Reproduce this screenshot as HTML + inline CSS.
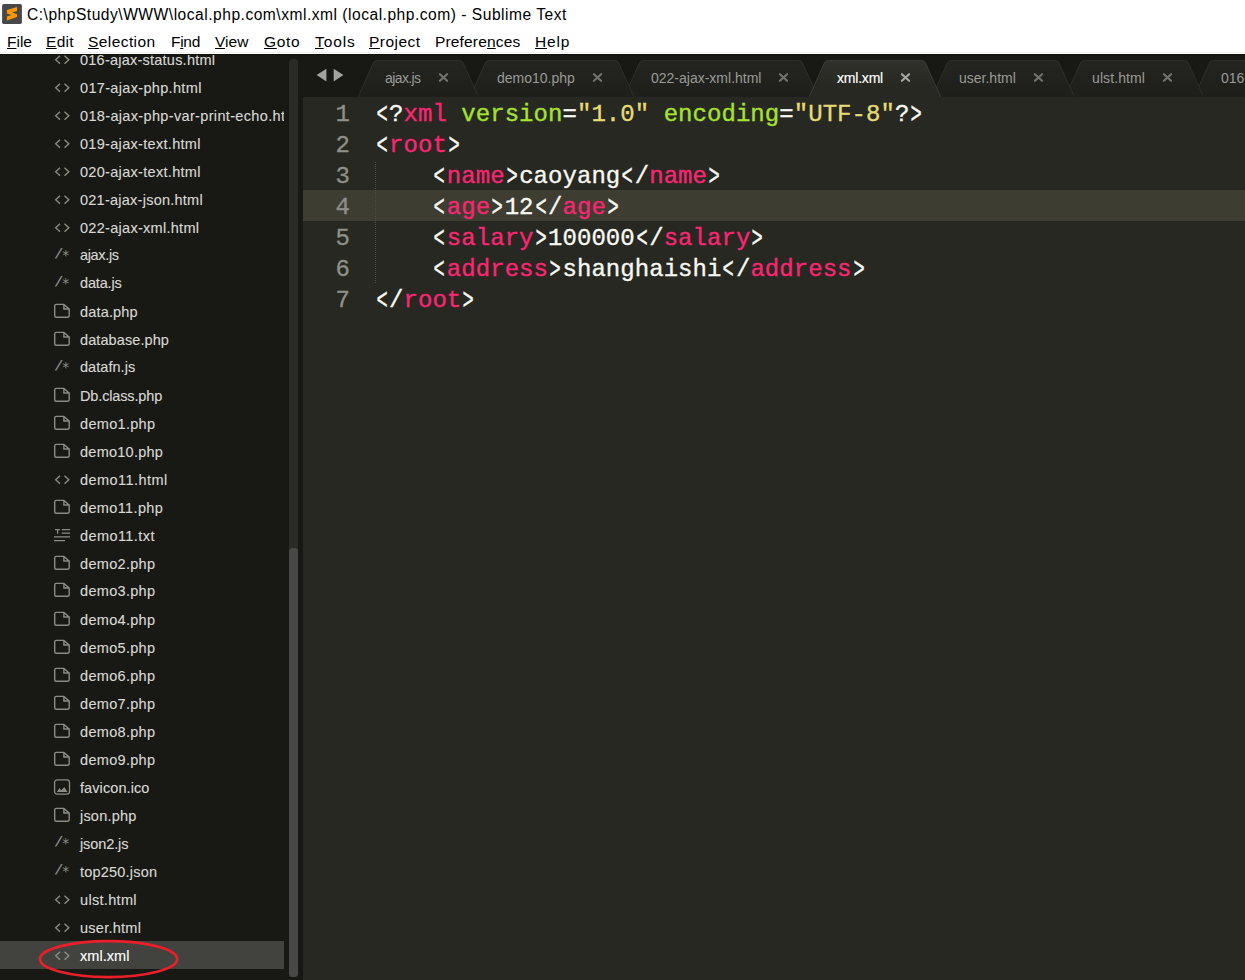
<!DOCTYPE html>
<html><head><meta charset="utf-8"><title>xml.xml - Sublime Text</title>
<style>
html,body{margin:0;padding:0}
body{width:1245px;height:980px;overflow:hidden;background:#fff;position:relative;font-family:"Liberation Sans",sans-serif}
#title{position:absolute;left:27px;top:5px;height:20px;line-height:20px;font-size:15.6px;letter-spacing:0.5px;color:#000;white-space:nowrap}
#appicon{position:absolute;left:2px;top:4px;width:20px;height:20px}
#menu{position:absolute;left:0;top:29px;height:26px;line-height:26px;font-size:15.5px;color:#000;white-space:nowrap}
#menu span{position:absolute;top:0}
#menu u{text-decoration:underline;text-decoration-thickness:1px;text-underline-offset:0.8px}
#dark{position:absolute;left:0;top:54px;width:1245px;height:926px;background:#181914;overflow:hidden}
#side{position:absolute;left:0;top:0;width:284px;height:926px;overflow:hidden}
.row{position:absolute;left:0;width:284px;height:28px;line-height:28px;white-space:nowrap;overflow:hidden}
.row.sel{background:#42433e}
.ic{position:absolute;left:53px;top:6px;width:18px;height:16px}
.sl,.as{position:absolute;font-family:"DejaVu Sans Mono","Liberation Mono",monospace;color:#8b8b86;line-height:1}
.sl{left:53.5px;top:4.5px;font-size:13px;transform:scaleX(1.25);transform-origin:0 0}
.as{left:61.5px;top:7px;font-size:14px}
.fn{position:absolute;left:80px;top:1px;font-size:14.5px;color:#d8d8d4;-webkit-text-stroke:0.12px #d8d8d4}
.row.sel .fn{color:#fff;-webkit-text-stroke:0.12px #fff}
#sbtrack{position:absolute;left:289px;top:5px;width:9px;height:918px;border-radius:3.5px;background:#2a2b26}
#sbthumb{position:absolute;left:289px;top:494px;width:9px;height:429px;border-radius:3.5px;background:#484846}
#tabbar{position:absolute;left:0;top:0;width:1245px;height:43px;overflow:hidden}
.tl{position:absolute;top:6px;height:37px;line-height:36px;font-size:14px;color:#9a9a96;white-space:nowrap}
.tl.act{color:#fff;-webkit-text-stroke:0.15px #fff}
.tx{position:absolute;top:17.8px;width:11px;height:11px}
.ln{position:absolute;left:0;width:942px;height:31px}
.ln.hl{background:#3e3d32}
.num{position:absolute;left:0;width:47px;text-align:right;top:2px;-webkit-text-stroke:0.3px #90908a;height:31px;line-height:31px;font-family:'Liberation Mono',monospace;font-size:24px;color:#90908a}
.code{position:absolute;left:71.6px;top:2px;-webkit-text-stroke:0.35px;height:31px;line-height:31px;font-family:'Liberation Mono',monospace;font-size:24px;letter-spacing:0.05px;color:#f8f8f2;white-space:pre}
.code b{display:inline-block;font-weight:normal;transform:scale(0.78,1.25)}
.t{color:#f92672}.a{color:#a6e22e}.s{color:#e6db74}
#guide{position:absolute;left:72px;top:65px;width:1px;height:121px;background:repeating-linear-gradient(to bottom,#4e4f48 0,#4e4f48 1px,transparent 1px,transparent 2px)}
.tabshape{position:absolute;top:6px;height:37px}
#editor{position:absolute;left:303px;top:43px;width:942px;height:883px;background:#272822}
</style></head><body>
<svg id="appicon" viewBox="0 0 20 20"><rect x="0.1" y="0" width="19.8" height="19.9" rx="1.6" fill="#484848"/><path d="M15 3 V7 L10.2 8.6 L15 10.2 V13.1 L4.9 16.6 V12.6 L9.5 11 L4.9 9.4 V6 Z" fill="#ff9800"/></svg>
<div id="title">C:\phpStudy\WWW\local.php.com\xml.xml (local.php.com) - Sublime Text</div>
<div id="menu">
<span style="left:7px"><u>F</u>ile</span>
<span style="left:46px;letter-spacing:0.3px"><u>E</u>dit</span>
<span style="left:88px;letter-spacing:0.42px"><u>S</u>election</span>
<span style="left:171px;letter-spacing:-0.3px">F<u>i</u>nd</span>
<span style="left:215px"><u>V</u>iew</span>
<span style="left:264px;letter-spacing:0.7px"><u>G</u>oto</span>
<span style="left:315px;letter-spacing:0.9px"><u>T</u>ools</span>
<span style="left:369px;letter-spacing:0.47px"><u>P</u>roject</span>
<span style="left:435px;letter-spacing:0.16px">Prefere<u>n</u>ces</span>
<span style="left:535px;letter-spacing:0.83px"><u>H</u>elp</span>
</div>
<div style="position:absolute;left:0;top:52px;width:1245px;height:1px;background:#f0f0f0"></div>
<div id="dark">
<div style="position:absolute;left:0;top:0;width:1245px;height:1px;background:#10100c;z-index:5"></div>
<div id="side">
<div class="row" style="top:-9px"><svg class="ic" viewBox="0 0 18 16"><path d="M7 4.7 L2.7 8.75 L7 12.8 M11.5 4.7 L15.8 8.75 L11.5 12.8" fill="none" stroke="#8b8b86" stroke-width="1.4"/></svg><span class="fn" style="letter-spacing:0.232px">016-ajax-status.html</span></div>
<div class="row" style="top:19px"><svg class="ic" viewBox="0 0 18 16"><path d="M7 4.7 L2.7 8.75 L7 12.8 M11.5 4.7 L15.8 8.75 L11.5 12.8" fill="none" stroke="#8b8b86" stroke-width="1.4"/></svg><span class="fn" style="letter-spacing:0.331px">017-ajax-php.html</span></div>
<div class="row" style="top:47px"><svg class="ic" viewBox="0 0 18 16"><path d="M7 4.7 L2.7 8.75 L7 12.8 M11.5 4.7 L15.8 8.75 L11.5 12.8" fill="none" stroke="#8b8b86" stroke-width="1.4"/></svg><span class="fn" style="letter-spacing:0.342px">018-ajax-php-var-print-echo.html</span></div>
<div class="row" style="top:75px"><svg class="ic" viewBox="0 0 18 16"><path d="M7 4.7 L2.7 8.75 L7 12.8 M11.5 4.7 L15.8 8.75 L11.5 12.8" fill="none" stroke="#8b8b86" stroke-width="1.4"/></svg><span class="fn" style="letter-spacing:0.306px">019-ajax-text.html</span></div>
<div class="row" style="top:103px"><svg class="ic" viewBox="0 0 18 16"><path d="M7 4.7 L2.7 8.75 L7 12.8 M11.5 4.7 L15.8 8.75 L11.5 12.8" fill="none" stroke="#8b8b86" stroke-width="1.4"/></svg><span class="fn" style="letter-spacing:0.306px">020-ajax-text.html</span></div>
<div class="row" style="top:131px"><svg class="ic" viewBox="0 0 18 16"><path d="M7 4.7 L2.7 8.75 L7 12.8 M11.5 4.7 L15.8 8.75 L11.5 12.8" fill="none" stroke="#8b8b86" stroke-width="1.4"/></svg><span class="fn" style="letter-spacing:0.247px">021-ajax-json.html</span></div>
<div class="row" style="top:159px"><svg class="ic" viewBox="0 0 18 16"><path d="M7 4.7 L2.7 8.75 L7 12.8 M11.5 4.7 L15.8 8.75 L11.5 12.8" fill="none" stroke="#8b8b86" stroke-width="1.4"/></svg><span class="fn" style="letter-spacing:0.287px">022-ajax-xml.html</span></div>
<div class="row" style="top:187px"><span class="sl">/</span><span class="as">*</span><span class="fn" style="letter-spacing:-0.35px;top:0">ajax.js</span></div>
<div class="row" style="top:215px"><span class="sl">/</span><span class="as">*</span><span class="fn" style="letter-spacing:-0.15px;top:0">data.js</span></div>
<div class="row" style="top:243px"><svg class="ic" viewBox="0 0 18 16"><path d="M3.2 1.4 H10.9 L16.2 6 V12.8 Q16.2 14.3 14.7 14.3 H3.2 Q1.7 14.3 1.7 12.8 V2.9 Q1.7 1.4 3.2 1.4 Z M10.9 1.4 V6 H16.2" fill="none" stroke="#8b8b86" stroke-width="1.4"/></svg><span class="fn" style="letter-spacing:0.171px">data.php</span></div>
<div class="row" style="top:271px"><svg class="ic" viewBox="0 0 18 16"><path d="M3.2 1.4 H10.9 L16.2 6 V12.8 Q16.2 14.3 14.7 14.3 H3.2 Q1.7 14.3 1.7 12.8 V2.9 Q1.7 1.4 3.2 1.4 Z M10.9 1.4 V6 H16.2" fill="none" stroke="#8b8b86" stroke-width="1.4"/></svg><span class="fn" style="letter-spacing:0.091px">database.php</span></div>
<div class="row" style="top:299px"><span class="sl">/</span><span class="as">*</span><span class="fn" style="letter-spacing:0.05px;top:0">datafn.js</span></div>
<div class="row" style="top:327px"><svg class="ic" viewBox="0 0 18 16"><path d="M3.2 1.4 H10.9 L16.2 6 V12.8 Q16.2 14.3 14.7 14.3 H3.2 Q1.7 14.3 1.7 12.8 V2.9 Q1.7 1.4 3.2 1.4 Z M10.9 1.4 V6 H16.2" fill="none" stroke="#8b8b86" stroke-width="1.4"/></svg><span class="fn" style="letter-spacing:-0.145px">Db.class.php</span></div>
<div class="row" style="top:355px"><svg class="ic" viewBox="0 0 18 16"><path d="M3.2 1.4 H10.9 L16.2 6 V12.8 Q16.2 14.3 14.7 14.3 H3.2 Q1.7 14.3 1.7 12.8 V2.9 Q1.7 1.4 3.2 1.4 Z M10.9 1.4 V6 H16.2" fill="none" stroke="#8b8b86" stroke-width="1.4"/></svg><span class="fn" style="letter-spacing:0.312px">demo1.php</span></div>
<div class="row" style="top:383px"><svg class="ic" viewBox="0 0 18 16"><path d="M3.2 1.4 H10.9 L16.2 6 V12.8 Q16.2 14.3 14.7 14.3 H3.2 Q1.7 14.3 1.7 12.8 V2.9 Q1.7 1.4 3.2 1.4 Z M10.9 1.4 V6 H16.2" fill="none" stroke="#8b8b86" stroke-width="1.4"/></svg><span class="fn" style="letter-spacing:0.256px">demo10.php</span></div>
<div class="row" style="top:411px"><svg class="ic" viewBox="0 0 18 16"><path d="M7 4.7 L2.7 8.75 L7 12.8 M11.5 4.7 L15.8 8.75 L11.5 12.8" fill="none" stroke="#8b8b86" stroke-width="1.4"/></svg><span class="fn" style="letter-spacing:0.45px">demo11.html</span></div>
<div class="row" style="top:439px"><svg class="ic" viewBox="0 0 18 16"><path d="M3.2 1.4 H10.9 L16.2 6 V12.8 Q16.2 14.3 14.7 14.3 H3.2 Q1.7 14.3 1.7 12.8 V2.9 Q1.7 1.4 3.2 1.4 Z M10.9 1.4 V6 H16.2" fill="none" stroke="#8b8b86" stroke-width="1.4"/></svg><span class="fn" style="letter-spacing:0.367px">demo11.php</span></div>
<div class="row" style="top:467px"><svg class="ic" viewBox="0 0 18 16"><path d="M2 2.6 H6.9 M4.6 2.6 V6.8 M8.8 2.6 H17.1 M8.8 6.2 H17.1 M1 9.9 H17.1 M1 13.6 H12" fill="none" stroke="#8b8b86" stroke-width="1.25"/></svg><span class="fn" style="letter-spacing:0.422px">demo11.txt</span></div>
<div class="row" style="top:495px"><svg class="ic" viewBox="0 0 18 16"><path d="M3.2 1.4 H10.9 L16.2 6 V12.8 Q16.2 14.3 14.7 14.3 H3.2 Q1.7 14.3 1.7 12.8 V2.9 Q1.7 1.4 3.2 1.4 Z M10.9 1.4 V6 H16.2" fill="none" stroke="#8b8b86" stroke-width="1.4"/></svg><span class="fn" style="letter-spacing:0.312px">demo2.php</span></div>
<div class="row" style="top:522px"><svg class="ic" viewBox="0 0 18 16"><path d="M3.2 1.4 H10.9 L16.2 6 V12.8 Q16.2 14.3 14.7 14.3 H3.2 Q1.7 14.3 1.7 12.8 V2.9 Q1.7 1.4 3.2 1.4 Z M10.9 1.4 V6 H16.2" fill="none" stroke="#8b8b86" stroke-width="1.4"/></svg><span class="fn" style="letter-spacing:0.312px">demo3.php</span></div>
<div class="row" style="top:551px"><svg class="ic" viewBox="0 0 18 16"><path d="M3.2 1.4 H10.9 L16.2 6 V12.8 Q16.2 14.3 14.7 14.3 H3.2 Q1.7 14.3 1.7 12.8 V2.9 Q1.7 1.4 3.2 1.4 Z M10.9 1.4 V6 H16.2" fill="none" stroke="#8b8b86" stroke-width="1.4"/></svg><span class="fn" style="letter-spacing:0.312px">demo4.php</span></div>
<div class="row" style="top:579px"><svg class="ic" viewBox="0 0 18 16"><path d="M3.2 1.4 H10.9 L16.2 6 V12.8 Q16.2 14.3 14.7 14.3 H3.2 Q1.7 14.3 1.7 12.8 V2.9 Q1.7 1.4 3.2 1.4 Z M10.9 1.4 V6 H16.2" fill="none" stroke="#8b8b86" stroke-width="1.4"/></svg><span class="fn" style="letter-spacing:0.312px">demo5.php</span></div>
<div class="row" style="top:607px"><svg class="ic" viewBox="0 0 18 16"><path d="M3.2 1.4 H10.9 L16.2 6 V12.8 Q16.2 14.3 14.7 14.3 H3.2 Q1.7 14.3 1.7 12.8 V2.9 Q1.7 1.4 3.2 1.4 Z M10.9 1.4 V6 H16.2" fill="none" stroke="#8b8b86" stroke-width="1.4"/></svg><span class="fn" style="letter-spacing:0.312px">demo6.php</span></div>
<div class="row" style="top:635px"><svg class="ic" viewBox="0 0 18 16"><path d="M3.2 1.4 H10.9 L16.2 6 V12.8 Q16.2 14.3 14.7 14.3 H3.2 Q1.7 14.3 1.7 12.8 V2.9 Q1.7 1.4 3.2 1.4 Z M10.9 1.4 V6 H16.2" fill="none" stroke="#8b8b86" stroke-width="1.4"/></svg><span class="fn" style="letter-spacing:0.312px">demo7.php</span></div>
<div class="row" style="top:663px"><svg class="ic" viewBox="0 0 18 16"><path d="M3.2 1.4 H10.9 L16.2 6 V12.8 Q16.2 14.3 14.7 14.3 H3.2 Q1.7 14.3 1.7 12.8 V2.9 Q1.7 1.4 3.2 1.4 Z M10.9 1.4 V6 H16.2" fill="none" stroke="#8b8b86" stroke-width="1.4"/></svg><span class="fn" style="letter-spacing:0.312px">demo8.php</span></div>
<div class="row" style="top:691px"><svg class="ic" viewBox="0 0 18 16"><path d="M3.2 1.4 H10.9 L16.2 6 V12.8 Q16.2 14.3 14.7 14.3 H3.2 Q1.7 14.3 1.7 12.8 V2.9 Q1.7 1.4 3.2 1.4 Z M10.9 1.4 V6 H16.2" fill="none" stroke="#8b8b86" stroke-width="1.4"/></svg><span class="fn" style="letter-spacing:0.312px">demo9.php</span></div>
<div class="row" style="top:719px"><svg class="ic" viewBox="0 0 18 16"><rect x="1.6" y="0.9" width="14.9" height="14.2" rx="2.5" fill="none" stroke="#8b8b86" stroke-width="1.3"/><path d="M3.9 12.9 L6.5 9.1 L8.3 11.3 L11.3 8.1 L14.6 12.9 Z" fill="#8b8b86"/></svg><span class="fn" style="letter-spacing:0.09px">favicon.ico</span></div>
<div class="row" style="top:747px"><svg class="ic" viewBox="0 0 18 16"><path d="M3.2 1.4 H10.9 L16.2 6 V12.8 Q16.2 14.3 14.7 14.3 H3.2 Q1.7 14.3 1.7 12.8 V2.9 Q1.7 1.4 3.2 1.4 Z M10.9 1.4 V6 H16.2" fill="none" stroke="#8b8b86" stroke-width="1.4"/></svg><span class="fn" style="letter-spacing:0.2px">json.php</span></div>
<div class="row" style="top:775px"><span class="sl">/</span><span class="as">*</span><span class="fn" style="letter-spacing:-0.1px">json2.js</span></div>
<div class="row" style="top:803px"><span class="sl">/</span><span class="as">*</span><span class="fn" style="letter-spacing:0.2px">top250.json</span></div>
<div class="row" style="top:831px"><svg class="ic" viewBox="0 0 18 16"><path d="M7 4.7 L2.7 8.75 L7 12.8 M11.5 4.7 L15.8 8.75 L11.5 12.8" fill="none" stroke="#8b8b86" stroke-width="1.4"/></svg><span class="fn" style="letter-spacing:0.325px">ulst.html</span></div>
<div class="row" style="top:859px"><svg class="ic" viewBox="0 0 18 16"><path d="M7 4.7 L2.7 8.75 L7 12.8 M11.5 4.7 L15.8 8.75 L11.5 12.8" fill="none" stroke="#8b8b86" stroke-width="1.4"/></svg><span class="fn" style="letter-spacing:0.262px">user.html</span></div>
<div class="row sel" style="top:887px"><svg class="ic" viewBox="0 0 18 16"><path d="M7 4.7 L2.7 8.75 L7 12.8 M11.5 4.7 L15.8 8.75 L11.5 12.8" fill="none" stroke="#8b8b86" stroke-width="1.4"/></svg><span class="fn" style="letter-spacing:0.05px">xml.xml</span></div>
</div>
<div id="sbtrack"></div><div id="sbthumb"></div>
<div id="tabbar">
<svg width="0" height="0" style="position:absolute"><defs><linearGradient id="tg" x1="0" y1="0" x2="0" y2="1"><stop offset="0" stop-color="#242520"/><stop offset="1" stop-color="#1e1f1a"/></linearGradient><linearGradient id="ta" x1="0" y1="0" x2="0" y2="1"><stop offset="0" stop-color="#30312b"/><stop offset="0.7" stop-color="#272822"/><stop offset="1" stop-color="#272822"/></linearGradient></defs></svg>
<svg class="tabshape" style="left:1193.6px;width:206.4px" viewBox="0 0 206.4 37"><path d="M0 37 L15.3 3 Q16.4 0.4 19.2 0.4 H187.20 Q190.00 0.4 191.10 3 L206.4 37 Z" fill="url(#tg)"/><path d="M0 37 L15.3 3 Q16.4 0.4 19.2 0.4 H187.20 Q190.00 0.4 191.10 3 L206.4 37" fill="none" stroke="rgba(255,255,255,0.075)" stroke-width="1"/></svg>
<svg class="tabshape" style="left:1064.6px;width:138.7px" viewBox="0 0 138.7 37"><path d="M0 37 L15.3 3 Q16.4 0.4 19.2 0.4 H119.50 Q122.30 0.4 123.40 3 L138.7 37 Z" fill="url(#tg)"/><path d="M0 37 L15.3 3 Q16.4 0.4 19.2 0.4 H119.50 Q122.30 0.4 123.40 3 L138.7 37" fill="none" stroke="rgba(255,255,255,0.075)" stroke-width="1"/></svg>
<svg class="tabshape" style="left:931.6px;width:142.4px" viewBox="0 0 142.4 37"><path d="M0 37 L15.3 3 Q16.4 0.4 19.2 0.4 H123.20 Q126.00 0.4 127.10 3 L142.4 37 Z" fill="url(#tg)"/><path d="M0 37 L15.3 3 Q16.4 0.4 19.2 0.4 H123.20 Q126.00 0.4 127.10 3 L142.4 37" fill="none" stroke="rgba(255,255,255,0.075)" stroke-width="1"/></svg>
<svg class="tabshape" style="left:624px;width:193.8px" viewBox="0 0 193.8 37"><path d="M0 37 L15.3 3 Q16.4 0.4 19.2 0.4 H174.60 Q177.40 0.4 178.50 3 L193.8 37 Z" fill="url(#tg)"/><path d="M0 37 L15.3 3 Q16.4 0.4 19.2 0.4 H174.60 Q177.40 0.4 178.50 3 L193.8 37" fill="none" stroke="rgba(255,255,255,0.075)" stroke-width="1"/></svg>
<svg class="tabshape" style="left:469.5px;width:164.0px" viewBox="0 0 164.0 37"><path d="M0 37 L15.3 3 Q16.4 0.4 19.2 0.4 H144.80 Q147.60 0.4 148.70 3 L164.0 37 Z" fill="url(#tg)"/><path d="M0 37 L15.3 3 Q16.4 0.4 19.2 0.4 H144.80 Q147.60 0.4 148.70 3 L164.0 37" fill="none" stroke="rgba(255,255,255,0.075)" stroke-width="1"/></svg>
<svg class="tabshape" style="left:357.8px;width:120.5px" viewBox="0 0 120.5 37"><path d="M0 37 L15.3 3 Q16.4 0.4 19.2 0.4 H101.30 Q104.10 0.4 105.20 3 L120.5 37 Z" fill="url(#tg)"/><path d="M0 37 L15.3 3 Q16.4 0.4 19.2 0.4 H101.30 Q104.10 0.4 105.20 3 L120.5 37" fill="none" stroke="rgba(255,255,255,0.075)" stroke-width="1"/></svg>
<svg class="tabshape" style="left:808.8px;width:131.8px" viewBox="0 0 131.8 37"><path d="M0 37 L15.3 3 Q16.4 0.4 19.2 0.4 H112.60 Q115.40 0.4 116.50 3 L131.8 37 Z" fill="url(#ta)"/><path d="M0 37 L15.3 3 Q16.4 0.4 19.2 0.4 H112.60 Q115.40 0.4 116.50 3 L131.8 37" fill="none" stroke="rgba(255,255,255,0.11)" stroke-width="1"/></svg>
<div class="tl" style="left:385px;letter-spacing:-0.6px">ajax.js</div><svg class="tx" style="left:438.2px" viewBox="0 0 11 11"><path d="M1.9 2.2 L9.1 8.8 M9.1 2.2 L1.9 8.8" stroke="#72736f" stroke-width="2.2" stroke-linecap="round" fill="none"/></svg><div class="tl" style="left:497px;letter-spacing:0px">demo10.php</div><svg class="tx" style="left:592.3px" viewBox="0 0 11 11"><path d="M1.9 2.2 L9.1 8.8 M9.1 2.2 L1.9 8.8" stroke="#72736f" stroke-width="2.2" stroke-linecap="round" fill="none"/></svg><div class="tl" style="left:651px;letter-spacing:0px">022-ajax-xml.html</div><svg class="tx" style="left:778.3px" viewBox="0 0 11 11"><path d="M1.9 2.2 L9.1 8.8 M9.1 2.2 L1.9 8.8" stroke="#72736f" stroke-width="2.2" stroke-linecap="round" fill="none"/></svg><div class="tl act" style="left:837px;letter-spacing:-0.2px">xml.xml</div><svg class="tx" style="left:900.1px" viewBox="0 0 11 11"><path d="M1.9 2.2 L9.1 8.8 M9.1 2.2 L1.9 8.8" stroke="#a6a6a2" stroke-width="2.2" stroke-linecap="round" fill="none"/></svg><div class="tl" style="left:959px;letter-spacing:0px">user.html</div><svg class="tx" style="left:1033.3px" viewBox="0 0 11 11"><path d="M1.9 2.2 L9.1 8.8 M9.1 2.2 L1.9 8.8" stroke="#72736f" stroke-width="2.2" stroke-linecap="round" fill="none"/></svg><div class="tl" style="left:1092px;letter-spacing:0.1px">ulst.html</div><svg class="tx" style="left:1162.2px" viewBox="0 0 11 11"><path d="M1.9 2.2 L9.1 8.8 M9.1 2.2 L1.9 8.8" stroke="#72736f" stroke-width="2.2" stroke-linecap="round" fill="none"/></svg><div class="tl" style="left:1221px;letter-spacing:0px">016-</div><svg class="tx" style="left:1394.5px" viewBox="0 0 11 11"><path d="M1.9 2.2 L9.1 8.8 M9.1 2.2 L1.9 8.8" stroke="#72736f" stroke-width="2.2" stroke-linecap="round" fill="none"/></svg><svg style="position:absolute;left:316px;top:14px;width:30px;height:14px" viewBox="316 68 30 14"><path d="M316.6 75.05 L326.4 68.7 V81.4 Z M343.4 75.05 L333.7 68.7 V81.4 Z" fill="#a2a29e"/></svg>
</div>
<div id="editor">
<div class="ln" style="top:0px"><span class="num">1</span><span class="code"><b>&lt;</b>?<span class="t">xml</span> <span class="a">version</span>=<span class="s">"1.0"</span> <span class="a">encoding</span>=<span class="s">"UTF-8"</span>?<b>&gt;</b></span></div>
<div class="ln" style="top:31px"><span class="num">2</span><span class="code"><b>&lt;</b><span class="t">root</span><b>&gt;</b></span></div>
<div class="ln" style="top:62px"><span class="num">3</span><span class="code">    <b>&lt;</b><span class="t">name</span><b>&gt;</b>caoyang<b>&lt;</b>/<span class="t">name</span><b>&gt;</b></span></div>
<div class="ln hl" style="top:93px"><span class="num">4</span><span class="code">    <b>&lt;</b><span class="t">age</span><b>&gt;</b>12<b>&lt;</b>/<span class="t">age</span><b>&gt;</b></span></div>
<div class="ln" style="top:124px"><span class="num">5</span><span class="code">    <b>&lt;</b><span class="t">salary</span><b>&gt;</b>100000<b>&lt;</b>/<span class="t">salary</span><b>&gt;</b></span></div>
<div class="ln" style="top:155px"><span class="num">6</span><span class="code">    <b>&lt;</b><span class="t">address</span><b>&gt;</b>shanghaishi<b>&lt;</b>/<span class="t">address</span><b>&gt;</b></span></div>
<div class="ln" style="top:186px"><span class="num">7</span><span class="code"><b>&lt;</b>/<span class="t">root</span><b>&gt;</b></span></div>
<div id="guide"></div>
</div>
<svg style="position:absolute;left:30px;top:880px;width:160px;height:46px" viewBox="30 934 160 46"><ellipse cx="108.5" cy="959.1" rx="68.6" ry="18.0" fill="none" stroke="#ea1f2a" stroke-width="2.6"/></svg>
</div>
</body></html>
